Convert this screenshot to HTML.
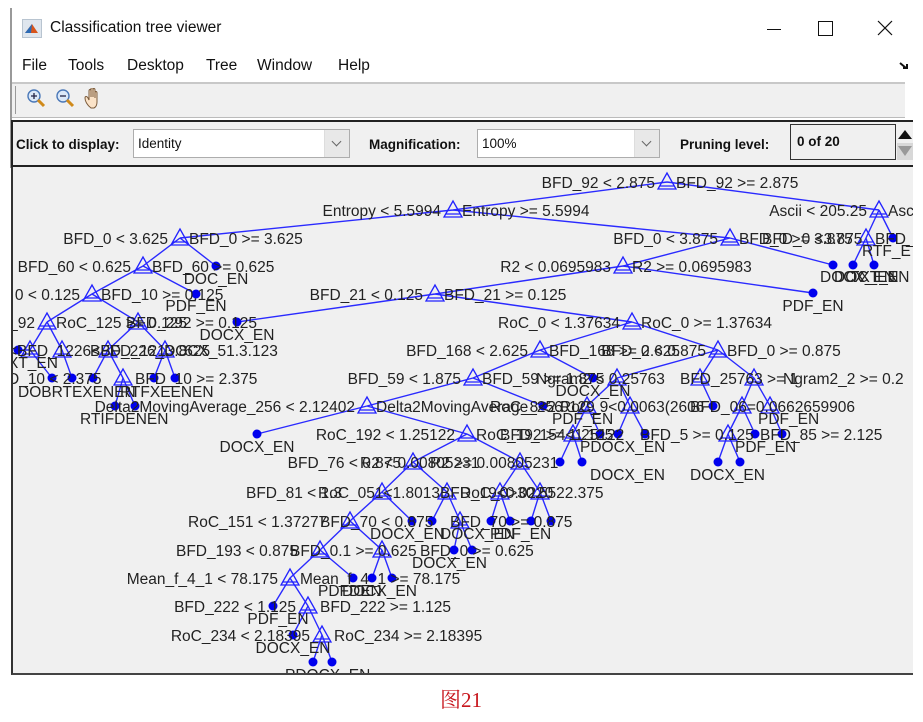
<!DOCTYPE html>
<html><head><meta charset="utf-8"><style>
body{margin:0;width:923px;height:722px;background:#fff;position:relative;overflow:hidden;font-family:"Liberation Sans",Arial,sans-serif;}
.a{position:absolute;}
.menu span{position:absolute;top:57px;font-size:15.5px;color:#111;}
.lbl{position:absolute;font-weight:bold;font-size:13.5px;color:#111;top:137px;}
.dd{position:absolute;top:129px;height:29px;background:#fff;border:1px solid #adadad;box-sizing:border-box;font-size:13.5px;line-height:27px;padding-left:4px;color:#111;}
.dd i{position:absolute;right:0;top:0;width:24px;height:27px;background:#e8e8e8;border-left:1px solid #ddd;}
.dd i:after{content:"";position:absolute;left:8px;top:8px;width:6px;height:6px;border-right:1px solid #666;border-bottom:1px solid #666;transform:rotate(45deg);}
</style></head><body>
<!-- title bar -->
<div class="a" style="left:10px;top:8px;width:2px;height:160px;background:#999"></div>
<svg class="a" style="left:22px;top:19px" width="20" height="19"><rect x="0.5" y="0.5" width="19" height="18" fill="#dfe6ee" stroke="#b8c4d0"/><path d="M3 14 L10 5 L16 14 Z" fill="#d8541b"/><path d="M3 14 L10 5 L9 14Z" fill="#2c6bb5"/></svg>
<div class="a" style="left:50px;top:19px;font-size:15.5px;color:#111">Classification tree viewer</div>
<div class="a" style="left:767px;top:29px;width:14px;height:1px;background:#111"></div>
<div class="a" style="left:818px;top:21px;width:13px;height:13px;border:1px solid #111"></div>
<svg class="a" style="left:877px;top:20px" width="16" height="16"><path d="M1 1L15 15M15 1L1 15" stroke="#111" stroke-width="1.2"/></svg>
<!-- menu -->
<div class="menu"><span style="left:22px">File</span><span style="left:68px">Tools</span><span style="left:127px">Desktop</span><span style="left:206px">Tree</span><span style="left:257px">Window</span><span style="left:338px">Help</span></div>
<svg class="a" style="left:899px;top:61px" width="12" height="10"><path d="M1 2L7 7M4 7H8V3" stroke="#111" stroke-width="2" fill="none"/></svg>
<!-- toolbar -->
<div class="a" style="left:12px;top:82px;width:893px;height:2px;background:#c8c8c8"></div>
<div class="a" style="left:12px;top:84px;width:893px;height:34px;background:#f0f0f0"></div>
<div class="a" style="left:15px;top:86px;width:1px;height:28px;background:#999"></div>
<svg class="a" style="left:25px;top:88px" width="90" height="22">
<circle cx="9" cy="8" r="6" fill="#dbe8f8" stroke="#4a78b8" stroke-width="1.4"/><path d="M6 8h6M9 5v6" stroke="#224" stroke-width="1.3"/><path d="M13 12l6 6" stroke="#d08a1a" stroke-width="3"/>
<circle cx="38" cy="8" r="6" fill="#dbe8f8" stroke="#4a78b8" stroke-width="1.4"/><path d="M35 8h6" stroke="#224" stroke-width="1.3"/><path d="M42 12l6 6" stroke="#d08a1a" stroke-width="3"/>
<path d="M66 20c-4-3-6-7-6-10c0-2 2-2 3 0l1 2v-9c0-2 2-2 2 0v6v-8c0-2 2-2 2 0v8v-7c0-2 2-2 2 0v8v-5c0-2 2-2 2 0v9c0 3-1 5-3 6z" fill="#fbe3c8" stroke="#7a5a3a" stroke-width="1"/>
</svg>
<div class="a" style="left:12px;top:117px;width:893px;height:1px;background:#bbb"></div>
<!-- panel -->
<div class="a" style="left:11px;top:120px;width:902px;height:47px;background:#f0f0f0;border-top:2px solid #222;border-bottom:2px solid #222;border-left:2px solid #222;box-sizing:border-box"></div>
<div class="lbl" style="left:16px">Click to display:</div>
<div class="dd" style="left:133px;width:217px">Identity<i></i></div>
<div class="lbl" style="left:369px">Magnification:</div>
<div class="dd" style="left:477px;width:183px">100%<i></i></div>
<div class="lbl" style="left:680px">Pruning level:</div>
<div class="a" style="left:790px;top:124px;width:106px;height:36px;border:1px solid #333;box-sizing:border-box;background:#f0f0f0;font-weight:bold;font-size:13.5px;line-height:34px;padding-left:6px;color:#111">0 of 20</div>
<svg class="a" style="left:897px;top:126px" width="16" height="34"><path d="M1 13L8 4L15 13Z" fill="#111"/><rect x="0" y="17" width="16" height="17" fill="#d8d8d8"/><path d="M1 20L8 30L15 20Z" fill="#999"/></svg>
<!-- plot -->
<div class="a" style="left:11px;top:167px;width:902px;height:508px;background:#f0f0f0;border-left:2px solid #333;border-bottom:2px solid #444;box-sizing:border-box"></div>
<svg class="a" style="left:13px;top:167px" width="900" height="506" viewBox="13 167 900 506">
<defs><g id="t"><path d="M0 -9L-9 7L9 7Z M-7 4H7" fill="none" stroke="#2222ff" stroke-width="1.3"/></g></defs>
<g stroke="#2a2aff" stroke-width="1.4" fill="none">
<path d="M667 182L453 210M667 182L879 210M453 210L180 238M453 210L730 238M879 210L866 238M879 210L893 238M866 238L853 265M866 238L874 265
M180 238L143 266M180 238L216 266M730 238L623 266M730 238L833 265M143 266L92 294M143 266L196 294M623 266L435 294M623 266L813 293
M92 294L47 322M92 294L138 322M435 294L237 322M435 294L632 322M47 322L30 350M47 322L62 350M138 322L108 350M138 322L165 350
M30 350L18 350M30 350L52 378M62 350L72 378M108 350L93 378M108 350L123 378M165 350L154 378M165 350L175 378M123 378L115 406M123 378L135 406
M632 322L540 350M632 322L718 350M540 350L473 378M540 350L593 378M718 350L617 378M718 350L700 378M718 350L754 378
M473 378L367 406M473 378L543 406M617 378L587 406M617 378L630 406M700 378L713 406M754 378L742 406M754 378L770 406
M367 406L257 434M367 406L467 434M587 406L573 434M587 406L600 434M630 406L618 434M630 406L645 434M742 406L728 434M742 406L755 434M770 406L782 434
M573 434L560 462M573 434L582 462M728 434L718 462M728 434L740 462
M467 434L413 462M467 434L520 462M413 462L382 492M413 462L447 492M520 462L500 492M520 462L540 492
M382 492L350 521M382 492L412 521M447 492L432 521M447 492L460 521M500 492L491 521M500 492L510 521M540 492L531 521M540 492L551 521
M350 521L320 550M350 521L382 550M460 521L454 550M460 521L472 550M382 550L372 578M382 550L392 578
M320 550L290 578M320 550L353 578M290 578L273 606M290 578L308 606M308 606L293 635M308 606L322 635M322 635L313 662M322 635L332 662"/>
</g>
<g>
<use href="#t" x="667" y="182"/><use href="#t" x="453" y="210"/><use href="#t" x="879" y="210"/><use href="#t" x="180" y="238"/><use href="#t" x="730" y="238"/><use href="#t" x="866" y="238"/>
<use href="#t" x="143" y="266"/><use href="#t" x="623" y="266"/><use href="#t" x="92" y="294"/><use href="#t" x="435" y="294"/><use href="#t" x="47" y="322"/><use href="#t" x="138" y="322"/><use href="#t" x="632" y="322"/>
<use href="#t" x="30" y="350"/><use href="#t" x="62" y="350"/><use href="#t" x="108" y="350"/><use href="#t" x="165" y="350"/><use href="#t" x="123" y="378"/>
<use href="#t" x="540" y="350"/><use href="#t" x="718" y="350"/><use href="#t" x="473" y="378"/><use href="#t" x="617" y="378"/><use href="#t" x="700" y="378"/><use href="#t" x="754" y="378"/>
<use href="#t" x="367" y="406"/><use href="#t" x="587" y="406"/><use href="#t" x="630" y="406"/><use href="#t" x="742" y="406"/><use href="#t" x="770" y="406"/>
<use href="#t" x="467" y="434"/><use href="#t" x="573" y="434"/><use href="#t" x="728" y="434"/><use href="#t" x="413" y="462"/><use href="#t" x="520" y="462"/>
<use href="#t" x="382" y="492"/><use href="#t" x="447" y="492"/><use href="#t" x="500" y="492"/><use href="#t" x="540" y="492"/><use href="#t" x="350" y="521"/><use href="#t" x="460" y="521"/>
<use href="#t" x="320" y="550"/><use href="#t" x="382" y="550"/><use href="#t" x="290" y="578"/><use href="#t" x="308" y="606"/><use href="#t" x="322" y="635"/>
</g>
<g fill="#0000ee">
<circle cx="893" cy="238" r="4.5"/><circle cx="833" cy="265" r="4.5"/><circle cx="853" cy="265" r="4.5"/><circle cx="874" cy="265" r="4.5"/><circle cx="216" cy="266" r="4.5"/><circle cx="196" cy="294" r="4.5"/><circle cx="813" cy="293" r="4.5"/><circle cx="237" cy="322" r="4.5"/>
<circle cx="18" cy="350" r="4.5"/><circle cx="52" cy="378" r="4.5"/><circle cx="72" cy="378" r="4.5"/><circle cx="93" cy="378" r="4.5"/><circle cx="154" cy="378" r="4.5"/><circle cx="175" cy="378" r="4.5"/><circle cx="115" cy="406" r="4.5"/><circle cx="135" cy="406" r="4.5"/>
<circle cx="593" cy="378" r="4.5"/><circle cx="543" cy="406" r="4.5"/><circle cx="713" cy="406" r="4.5"/><circle cx="257" cy="434" r="4.5"/><circle cx="600" cy="434" r="4.5"/><circle cx="618" cy="434" r="4.5"/><circle cx="645" cy="434" r="4.5"/><circle cx="755" cy="434" r="4.5"/><circle cx="782" cy="434" r="4.5"/>
<circle cx="560" cy="462" r="4.5"/><circle cx="582" cy="462" r="4.5"/><circle cx="718" cy="462" r="4.5"/><circle cx="740" cy="462" r="4.5"/>
<circle cx="412" cy="521" r="4.5"/><circle cx="432" cy="521" r="4.5"/><circle cx="491" cy="521" r="4.5"/><circle cx="510" cy="521" r="4.5"/><circle cx="531" cy="521" r="4.5"/><circle cx="551" cy="521" r="4.5"/>
<circle cx="454" cy="550" r="4.5"/><circle cx="472" cy="550" r="4.5"/><circle cx="353" cy="578" r="4.5"/><circle cx="372" cy="578" r="4.5"/><circle cx="392" cy="578" r="4.5"/><circle cx="273" cy="606" r="4.5"/><circle cx="293" cy="635" r="4.5"/><circle cx="313" cy="662" r="4.5"/><circle cx="332" cy="662" r="4.5"/>
</g>
<g font-family="Liberation Sans, Arial, sans-serif" font-size="15.5" fill="#222">
<text x="655" y="188" text-anchor="end">BFD_92 &lt; 2.875</text><text x="676" y="188">BFD_92 &gt;= 2.875</text>
<text x="441" y="216" text-anchor="end">Entropy &lt; 5.5994</text><text x="462" y="216">Entropy &gt;= 5.5994</text>
<text x="867" y="216" text-anchor="end">Ascii &lt; 205.25</text><text x="888" y="216">Ascii</text>
<text x="168" y="244" text-anchor="end">BFD_0 &lt; 3.625</text><text x="189" y="244">BFD_0 &gt;= 3.625</text>
<text x="718" y="244" text-anchor="end">BFD_0 &lt; 3.875</text><text x="739" y="244">BFD_0 &gt;= 3.875</text><text x="762" y="244">BFD_0 &lt;3.875</text><text x="875" y="244">BFD_</text>
<text x="862" y="256">RTF_E</text><text x="820" y="282">DOCX_EN</text><text x="834" y="282">DOC_EN</text><text x="850" y="282">TXT_EN</text>
<text x="131" y="272" text-anchor="end">BFD_60 &lt; 0.625</text><text x="152" y="272">BFD_60 &gt;= 0.625</text><text x="216" y="284" text-anchor="middle">DOC_EN</text>
<text x="611" y="272" text-anchor="end">R2 &lt; 0.0695983</text><text x="632" y="272">R2 &gt;= 0.0695983</text>
<text x="80" y="300" text-anchor="end">0 &lt; 0.125</text><text x="101" y="300">BFD_10 &gt;= 0.125</text><text x="196" y="311" text-anchor="middle">PDF_EN</text>
<text x="423" y="300" text-anchor="end">BFD_21 &lt; 0.125</text><text x="444" y="300">BFD_21 &gt;= 0.125</text><text x="813" y="311" text-anchor="middle">PDF_EN</text>
<text x="35" y="328" text-anchor="end">BFD_92</text><text x="56" y="328">RoC_125 &gt;= 0.125</text><text x="126" y="328">BFD_292 &gt;= 0.125</text><text x="237" y="340" text-anchor="middle">DOCX_EN</text>
<text x="620" y="328" text-anchor="end">RoC_0 &lt; 1.37634</text><text x="641" y="328">RoC_0 &gt;= 1.37634</text>
<text x="8" y="356">&lt;BFD_1226&lt;BFD_1213.8</text><text x="90" y="356">BFD_226_DOCX_51.3.123</text><text x="180" y="356">.625</text><text x="8" y="368">XT_EN</text>
<text x="8" y="384">D_10 &lt; 2.375</text><text x="135" y="384">BFD_10 &gt;= 2.375</text><text x="18" y="397">DOBRTEXENEN</text><text x="120" y="397">RTFXEENEN</text><text x="80" y="424">RTIFDENEN</text>
<text x="528" y="356" text-anchor="end">BFD_168 &lt; 2.625</text><text x="549" y="356">BFD_168 &gt;= 2.625</text><text x="706" y="356" text-anchor="end">BFD_0 &lt; 0.875</text><text x="727" y="356">BFD_0 &gt;= 0.875</text>
<text x="461" y="384" text-anchor="end">BFD_59 &lt; 1.875</text><text x="482" y="384">BFD_59 &gt;= 1.875</text><text x="536" y="384">Ngram2 &lt; 0.25763</text><text x="680" y="384">BFD_25763 &gt;= 1</text><text x="783" y="384">Ngram2_2 &gt;= 0.2</text>
<text x="593" y="396" text-anchor="middle">DOCX_EN</text>
<text x="355" y="412" text-anchor="end">Delta2MovingAverage_256 &lt; 2.12402</text><text x="376" y="412">Delta2MovingAverage_256</text><text x="490" y="412">RoC_8&lt;2.0129</text><text x="560" y="412">RoC_9&lt;0.0063(2606</text><text x="690" y="412">BFD_06=0.0662659906</text>
<text x="552" y="424">PDF_EN</text><text x="758" y="424">PDF_EN</text>
<text x="257" y="452" text-anchor="middle">DOCX_EN</text>
<text x="455" y="440" text-anchor="end">RoC_192 &lt; 1.25122</text><text x="476" y="440">RoC_192 &gt;= 1.25122</text><text x="500" y="440">BFD_154&lt;1.125</text><text x="640" y="440">BFD_5 &gt;= 0.125</text><text x="760" y="440">BFD_85 &gt;= 2.125</text>
<text x="580" y="452">PDOCX_EN</text><text x="735" y="452">PDF_EN</text>
<text x="401" y="468" text-anchor="end">BFD_76 &lt; 0.875</text><text x="360" y="468">R2 &lt; 0.00805231</text><text x="430" y="468">R2 &gt;= 0.00805231</text>
<text x="590" y="480">DOCX_EN</text><text x="690" y="480">DOCX_EN</text>
<text x="246" y="498">BFD_81 &lt; 1.3</text><text x="318" y="498">RoC_051&lt;1.8013BFD_19&lt;0.0220</text><text x="460" y="498">RoC_0&gt;30.5522.375</text>
<text x="188" y="527">RoC_151 &lt; 1.37277</text><text x="320" y="527">BFD_70 &lt; 0.875</text><text x="450" y="527">BFD_70 &gt;= 0.875</text>
<text x="370" y="539">DOCX_EN</text><text x="440" y="539">DOCX_EN</text><text x="490" y="539">PDF_EN</text>
<text x="176" y="556">BFD_193 &lt; 0.875</text><text x="290" y="556">BFD_0.1 &gt;= 0.625</text><text x="420" y="556">BFD_0 &gt;= 0.625</text><text x="412" y="568">DOCX_EN</text>
<text x="278" y="584" text-anchor="end">Mean_f_4_1 &lt; 78.175</text><text x="300" y="584">Mean_f_4_1 &gt;= 78.175</text><text x="318" y="596">PDFDEN</text><text x="342" y="596">DOCX_EN</text>
<text x="296" y="612" text-anchor="end">BFD_222 &lt; 1.125</text><text x="320" y="612">BFD_222 &gt;= 1.125</text><text x="278" y="624" text-anchor="middle">PDF_EN</text>
<text x="310" y="641" text-anchor="end">RoC_234 &lt; 2.18395</text><text x="334" y="641">RoC_234 &gt;= 2.18395</text><text x="293" y="653" text-anchor="middle">DOCX_EN</text>
<text x="285" y="680">PDOCX_EN</text>
</g>
</svg>
<div class="a" style="left:0;top:675px;width:923px;height:47px;background:#fff"></div>
<div class="a" style="left:440px;top:684px;font-family:'Liberation Serif','Noto Serif CJK SC',serif;font-size:21px;color:#c8161d">图21</div>
</body></html>
